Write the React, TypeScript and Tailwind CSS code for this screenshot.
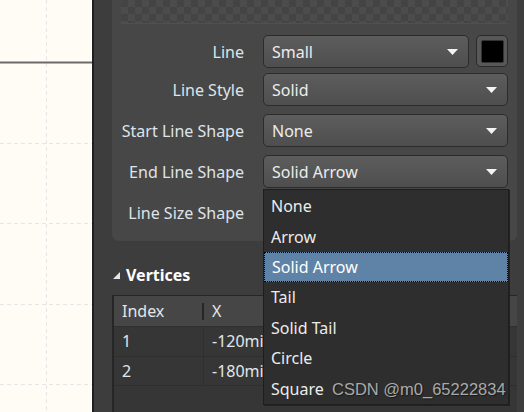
const UI = "font-['Noto_Sans','Open_Sans',sans-serif]";

const SHAPES = ["None", "Arrow", "Solid Arrow", "Tail", "Solid Tail", "Circle", "Square"];

function Caret() {
  return (
    <svg width="11" height="6" viewBox="0 0 11 6" className="shrink-0">
      <path d="M0 0h11L5.5 6z" fill="#f4f4f4" />
    </svg>
  );
}

function Combo({ value, className = "" }: { value: string; className?: string }) {
  return (
    <div
      className={`flex h-[33px] items-center justify-between rounded-[5px] border border-[#2c2c2c] bg-gradient-to-b from-[#5d5d5d] to-[#4e4e4e] pl-[8px] pr-[10px] text-[#ececec] ${className}`}
    >
      <span>{value}</span>
      <Caret />
    </div>
  );
}

function FieldRow({ label, children, className = "" }: { label: string; children: React.ReactNode; className?: string }) {
  return (
    <div className={`flex items-center ${className}`}>
      <div className="w-[123px] shrink-0 text-right text-[#dfe4ea]">{label}</div>
      <div className="ml-[19px] flex flex-1 gap-[7px]">{children}</div>
    </div>
  );
}

function Canvas() {
  return (
    <div className="h-full w-[92px] shrink-0 bg-[#fffcf6]">
      <svg width="92" height="412">
        <g stroke="#e6e6e6" strokeWidth="1" strokeDasharray="4 3">
          <line x1="46.5" y1="0" x2="46.5" y2="412" />
          <line x1="0" y1="143.5" x2="92" y2="143.5" />
          <line x1="0" y1="223.5" x2="92" y2="223.5" />
          <line x1="0" y1="304.5" x2="92" y2="304.5" />
          <line x1="0" y1="384.5" x2="92" y2="384.5" />
        </g>
        <line x1="0" y1="62.5" x2="92" y2="62.5" stroke="#6a6a6a" strokeWidth="2" />
      </svg>
    </div>
  );
}

function ShapeMenu() {
  return (
    <div className="absolute left-[169px] top-[189px] h-[216px] w-[246px] border border-[#1e1e1e] bg-[#2e2e2e] pt-[1px] shadow-[1px_1px_0_#222]">
      {SHAPES.map((s) => (
        <div
          key={s}
          className={`flex h-[30.4px] items-center pl-[7px] ${
            s === "Solid Arrow" ? "border border-dotted border-black bg-[#5f83a6] pl-[6px] text-white" : "text-[#ececec]"
          }`}
        >
          {s}
        </div>
      ))}
    </div>
  );
}

export default function App() {
  return (
    <div className={`flex h-[412px] w-[524px] overflow-hidden text-[16px] leading-none ${UI}`}>
      <Canvas />
      <div className="w-[2px] shrink-0 bg-[#1f1f1f]" />

      <div className="relative flex flex-1 flex-col bg-[#3d3d3d] pl-[18px] pr-[7px]">
        <div className="flex h-[241px] flex-col rounded-b-[7px] bg-[#474747] pr-[9px] pl-[9px]">
          <div className="h-[24px] shrink-0 border-b border-[#505050] bg-[repeating-conic-gradient(#4c4c4c_0%_25%,#444444_0%_50%)] bg-[length:14px_14px]" />

          <FieldRow label="Line" className="mt-[11px]">
            <Combo value="Small" className="flex-1" />
            <div className="flex h-[32px] w-[32px] items-center justify-center rounded-[5px] border border-[#2a2a2a] bg-[#585858]">
              <div className="h-[23px] w-[23px] rounded-[2px] border border-[#333] bg-black" />
            </div>
          </FieldRow>
          <FieldRow label="Line Style" className="mt-[5px]">
            <Combo value="Solid" className="flex-1" />
          </FieldRow>
          <FieldRow label="Start Line Shape" className="mt-[8px]">
            <Combo value="None" className="flex-1" />
          </FieldRow>
          <FieldRow label="End Line Shape" className="mt-[8px]">
            <Combo value="Solid Arrow" className="flex-1" />
          </FieldRow>
          <FieldRow label="Line Size Shape" className="mt-[8px]">
            <Combo value="" className="flex-1" />
          </FieldRow>
        </div>

        <div className="mt-[26px] flex items-center gap-[6px] pl-[1px]">
          <svg width="7" height="7" viewBox="0 0 7 7">
            <path d="M7 0v7H0z" fill="#e6e6e6" />
          </svg>
          <span className="font-bold text-white">Vertices</span>
        </div>

        <div className="mt-[12px] flex flex-1 flex-col border-l-2 border-t border-[#262626] bg-[#363636]">
          <div className="flex h-[30px] items-center bg-[#464646] text-[#e2e6ea]">
            <div className="flex w-[90px] items-center justify-between pl-[8px]">
              <span>Index</span>
              <span className="h-[17px] w-[2px] bg-[#262626]" />
            </div>
            <div className="pl-[8px]">X</div>
          </div>
          {[
            ["1", "-120mil"],
            ["2", "-180mil"],
          ].map(([i, x]) => (
            <div key={i} className="flex h-[29.5px] items-center border-t border-[#2f2f2f] text-[#e2e6ea]">
              <div className="flex h-full w-[90px] items-center border-r border-[#2f2f2f] pl-[8px]">{i}</div>
              <div className="pl-[8px]">{x}</div>
            </div>
          ))}
          <div className="border-t border-[#2f2f2f]" />
        </div>

        <ShapeMenu />

        <div className="absolute left-[238px] top-[381px] font-['Liberation_Sans',Arial,sans-serif] text-[16.5px] text-[#a9a9a9] [text-shadow:1px_1px_1px_#1a1a1a]">
          CSDN @m0_65222834
        </div>
      </div>
    </div>
  );
}
